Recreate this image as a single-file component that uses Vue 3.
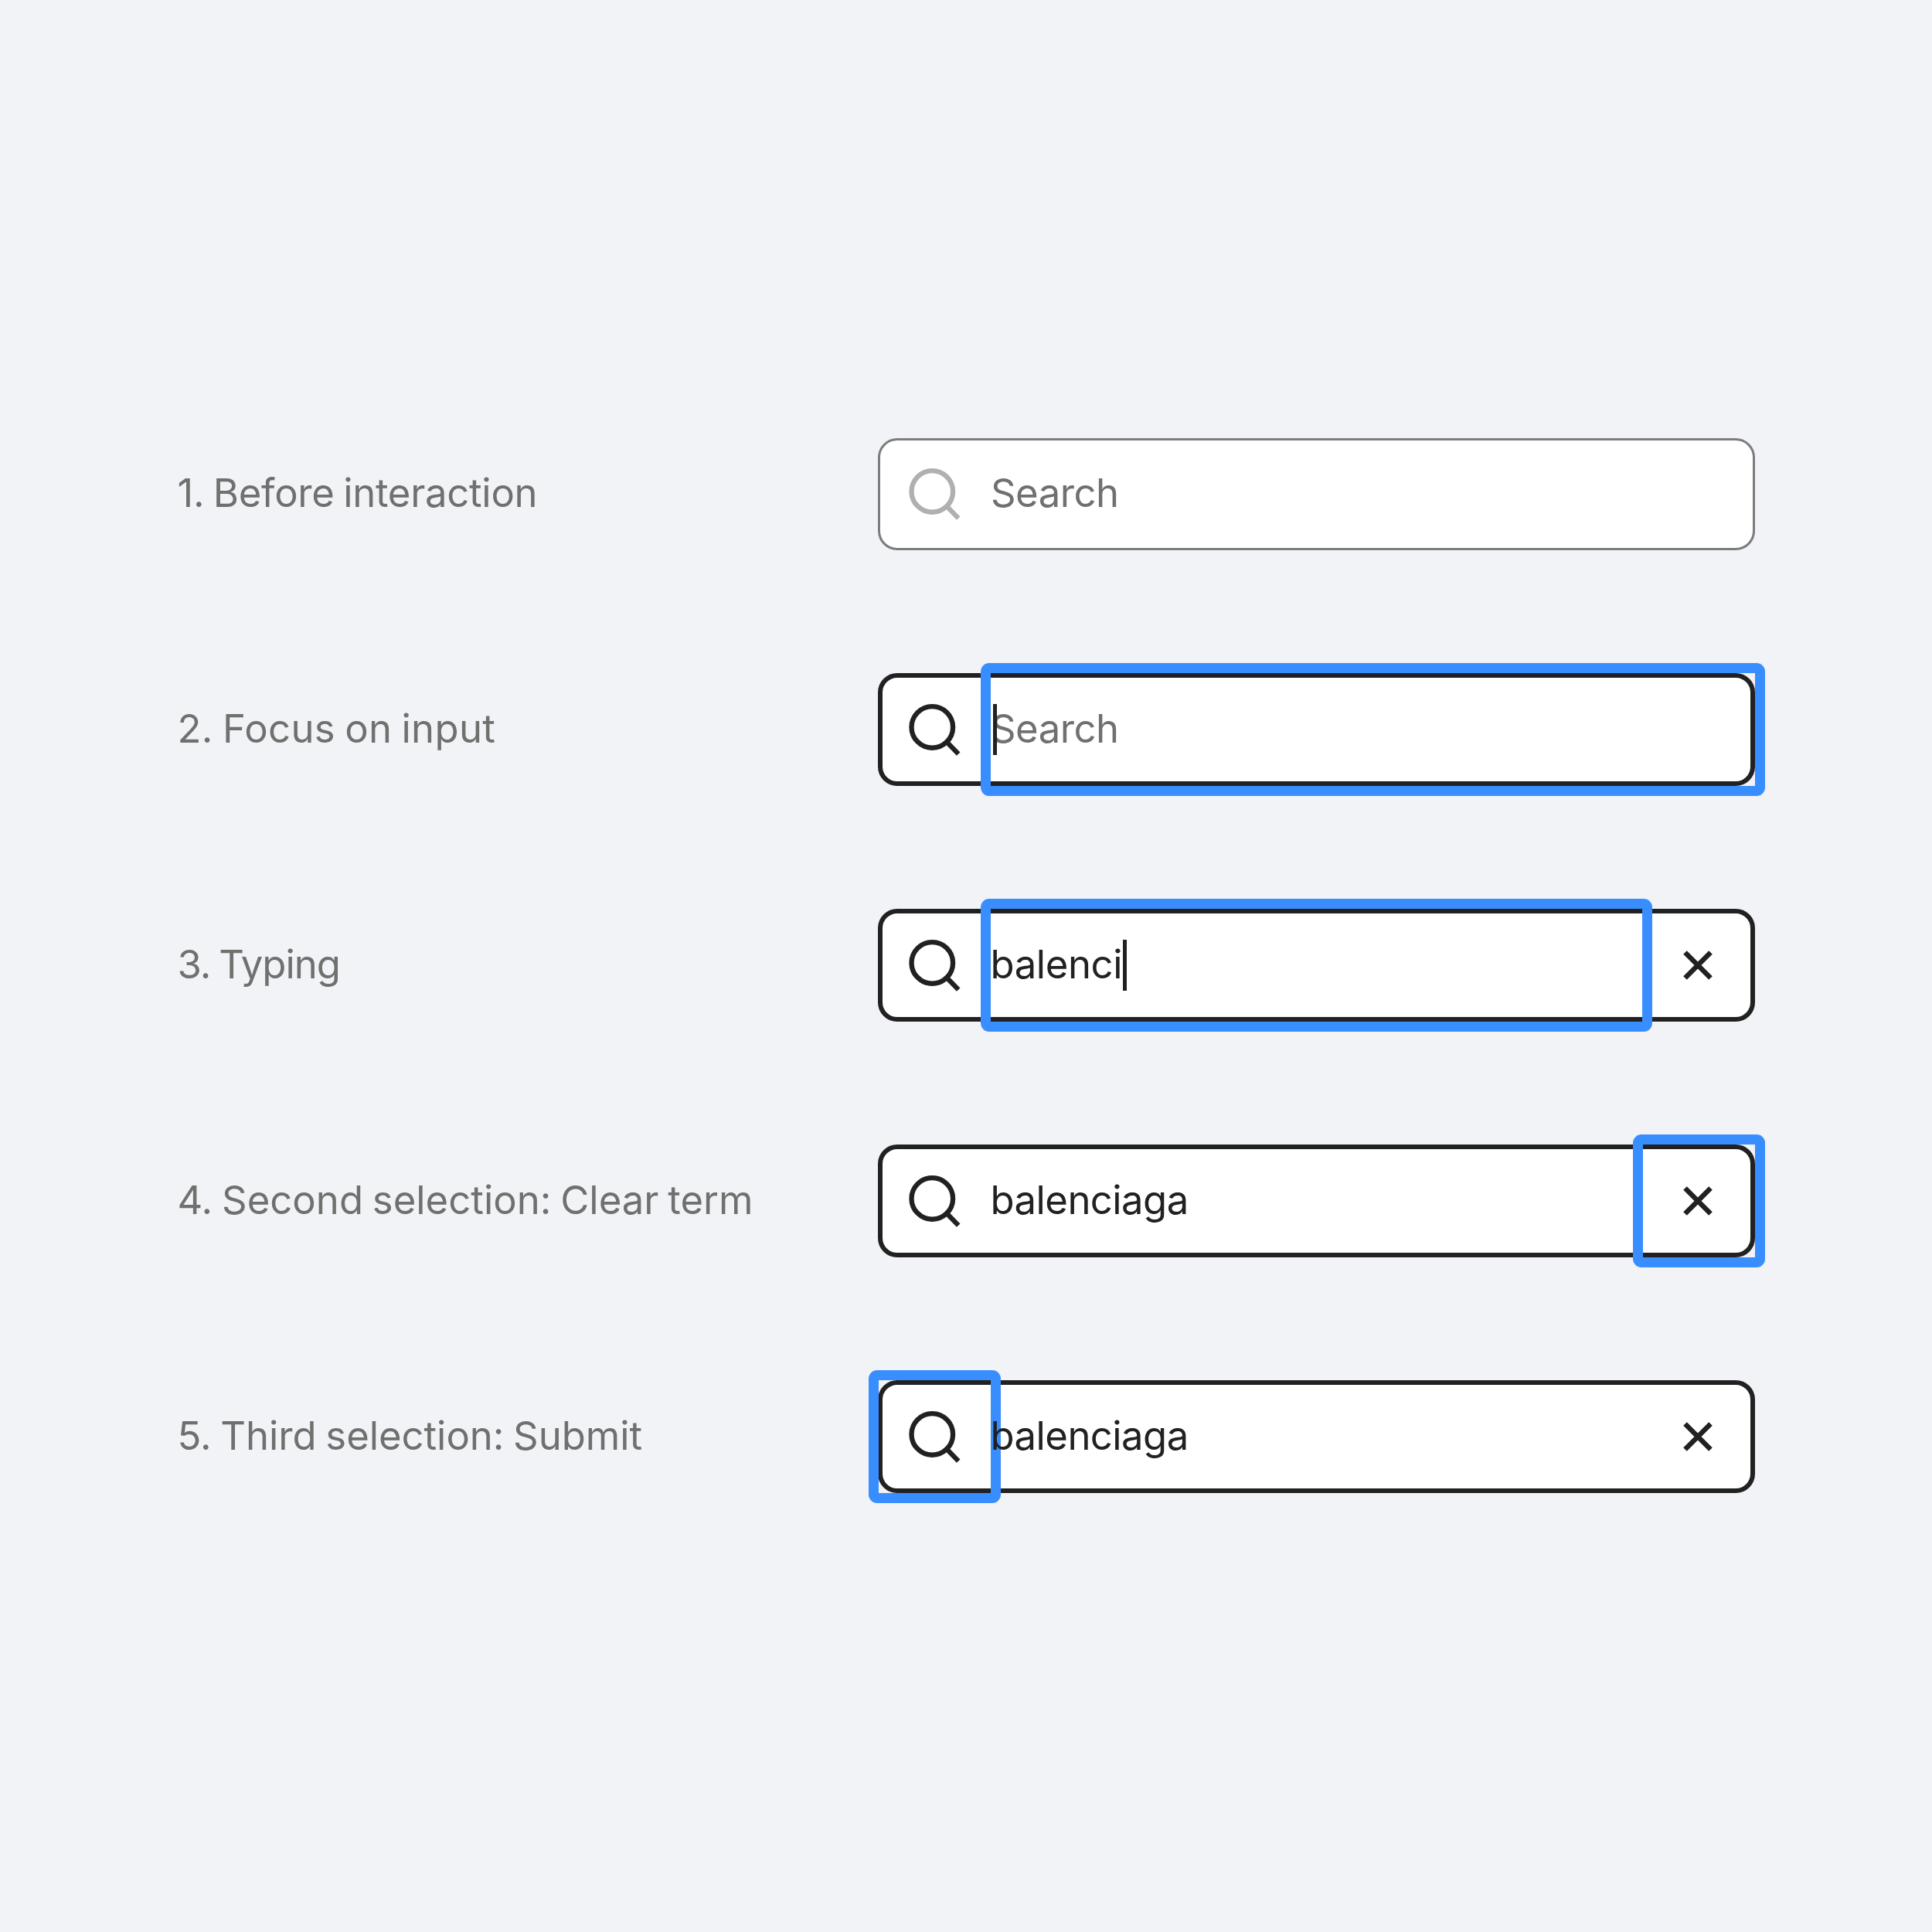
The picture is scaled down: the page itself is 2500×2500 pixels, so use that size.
<script setup>
const rows = [
  { label: '1. Before interaction', labelSpacing: -0.27, text: 'Search', spacing: -0.5, idle: true, placeholder: true },
  { label: '2. Focus on input', labelSpacing: 0.35, text: 'Search', spacing: -0.5, placeholder: true, caret: 'start', ring: 'ring-input-wide' },
  { label: '3. Typing', labelSpacing: -1, text: 'balenci', spacing: -0.4, caret: 'end', clear: true, ring: 'ring-input' },
  { label: '4. Second selection: Clear term', labelSpacing: 0.02, text: 'balenciaga', spacing: -0.54, clear: true, ring: 'ring-clear' },
  { label: '5. Third selection: Submit', labelSpacing: -0.04, text: 'balenciaga', spacing: -0.54, clear: true, ring: 'ring-submit' },
]
</script>

<template>
  <main class="page">
    <section v-for="row in rows" :key="row.label" class="row">
      <span class="label" :style="{ letterSpacing: row.labelSpacing + 'px' }">{{ row.label }}</span>
      <div class="field" :class="{ idle: row.idle }">
        <div class="submit">
          <svg class="glass" viewBox="0 0 72 72" fill="none" stroke="currentColor" stroke-width="6.35">
            <circle cx="33.3" cy="32.9" r="26.8" />
            <path d="M51 51 L67.2 67.6" />
          </svg>
        </div>
        <div class="value" :class="{ placeholder: row.placeholder }">
          <span class="text" :style="{ letterSpacing: row.spacing + 'px' }">{{ row.text }}</span>
          <i v-if="row.caret" class="caret" :class="row.caret"></i>
        </div>
        <div v-if="row.clear" class="clear">
          <svg class="cross" viewBox="0 0 40 40" fill="none" stroke="currentColor" stroke-width="6.5">
            <path d="M3.5 3.5 L36.5 36.5 M36.5 3.5 L3.5 36.5" />
          </svg>
        </div>
        <div v-if="row.ring" class="ring" :class="row.ring"></div>
      </div>
    </section>
  </main>
</template>

<style>
body {
  margin: 0;
  background: #f1f3f7;
}
</style>

<style scoped>
.page {
  box-sizing: border-box;
  width: 2500px;
  height: 2500px;
  padding: 566.6px 229px 0 229.5px;
  display: flex;
  flex-direction: column;
  gap: 159.3px;
  background: #f1f3f7;
  font-family: Inter, "Liberation Sans", sans-serif;
  font-size: 50.8px;
  line-height: 62px;
  color: #6f716f;
}
.row {
  height: 145.6px;
  display: flex;
  justify-content: space-between;
  align-items: stretch;
}
.label {
  display: flex;
  align-items: center;
  padding-bottom: 2px;
  white-space: nowrap;
  word-spacing: -2.5px;
}
.field {
  position: relative;
  box-sizing: border-box;
  width: 1135px;
  display: flex;
  align-items: stretch;
  border: 6px solid #212121;
  border-radius: 25px;
  background: #fff;
  color: #212121;
}
.field.idle {
  border: 3px solid #7c7c7c;
  padding: 3px;
}
.submit {
  width: 139.5px;
  display: flex;
  align-items: center;
}
.glass {
  display: block;
  width: 72px;
  height: 72px;
  margin-left: 30.5px;
}
.idle .glass {
  color: #b0b0b0;
}
.value {
  position: relative;
  z-index: 2;
  flex: 1;
  display: flex;
  align-items: center;
}
.text {
  padding-bottom: 2px;
  white-space: nowrap;
}
.placeholder .text {
  color: #6f716f;
  margin-left: 0.5px;
}
.caret {
  width: 5px;
  height: 66px;
  background: #212121;
}
.caret.start {
  order: -1;
  margin: 0 -8px 0 3px;
  z-index: 1;
}
.caret.end {
  margin-left: 1px;
}
.clear {
  width: 140px;
  display: flex;
  align-items: center;
  justify-content: center;
}
.cross {
  display: block;
  width: 40px;
  height: 40px;
  margin-left: 4px;
}
.ring {
  position: absolute;
  z-index: 1;
  top: -19px;
  bottom: -19px;
  border: 13px solid #398eff;
  border-radius: 11px;
}
.ring-input-wide {
  left: 126.5px;
  right: -18.5px;
}
.ring-input {
  left: 126.5px;
  right: 127.5px;
}
.ring-clear {
  width: 145px;
  right: -18.5px;
}
.ring-submit {
  left: -18.5px;
  width: 145px;
}
</style>
